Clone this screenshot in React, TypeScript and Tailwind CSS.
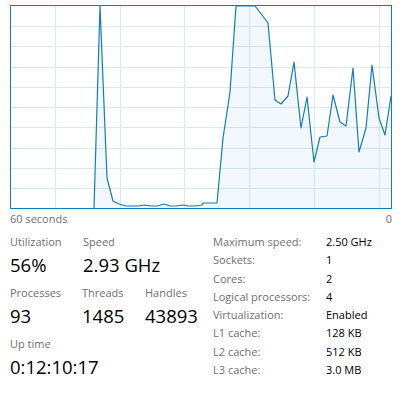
const points: [number, number][] = [
  [94, 208], [100, 6], [107, 178], [113, 201], [119, 204], [126, 206], [132, 206],
  [138, 206], [145, 205], [151, 206], [157, 206], [164, 204], [170, 206], [176, 206],
  [183, 205], [189, 206], [195, 206], [202, 205], [203, 203], [210, 203], [217, 203],
  [223, 138], [230, 92], [236, 6], [243, 6], [249, 6], [255, 6], [262, 15], [268, 23],
  [275, 100], [281, 104], [288, 96], [294, 62], [301, 128], [307, 97], [314, 162],
  [320, 137], [327, 136], [333, 95], [340, 122], [346, 126], [353, 68], [359, 152],
  [366, 128], [372, 65], [379, 118], [385, 135], [391, 96],
];

const hLines = [26, 46, 67, 87, 107, 127, 148, 168, 188];
const vLines = [55, 120, 184, 249, 314, 379];

const specs = [
  ["Maximum speed:", "2.50 GHz"],
  ["Sockets:", "1"],
  ["Cores:", "2"],
  ["Logical processors:", "4"],
  ["Virtualization:", "Enabled"],
  ["L1 cache:", "128 KB"],
  ["L2 cache:", "512 KB"],
  ["L3 cache:", "3.0 MB"],
];

function Chart() {
  const line = points.map(([x, y]) => `${x},${y}`).join(" ");
  const area = `${line} 391,208`;
  return (
    <div className="w-[382px] h-[204px] border border-[#117dbb] bg-white">
      <svg width="380" height="202" viewBox="11 6 380 202" className="block">
        {hLines.map((y) => (
          <line key={"h" + y} x1="11" x2="391" y1={y + 0.5} y2={y + 0.5} stroke="#d9eaf4" strokeWidth="1" />
        ))}
        {vLines.map((x) => (
          <line key={"v" + x} x1={x + 0.5} x2={x + 0.5} y1="6" y2="208" stroke="#d9eaf4" strokeWidth="1" />
        ))}
        <polygon points={area} fill="#117dbb" fillOpacity="0.06" />
        <polyline points={line} fill="none" stroke="#117dbb" strokeWidth="1.2" strokeLinejoin="round" />
      </svg>
    </div>
  );
}

function Stat({ label, value, w }: { label: string; value: string; w: string }) {
  return (
    <div className={w}>
      <div className="text-[11px] leading-[16px] text-[#707070]">{label}</div>
      <div className="mt-[3px] text-[18.5px] leading-[24px] text-black">{value}</div>
    </div>
  );
}

export default function App() {
  return (
    <div className="w-[405px] h-[402px] bg-white pt-[5px] pl-[10px] font-['Open_Sans',sans-serif] overflow-hidden">
      <Chart />
      <div className="flex justify-between w-[382px] pt-[2px] text-[11px] leading-[16px] text-[#707070]">
        <span>60 seconds</span>
        <span>0</span>
      </div>

      <div className="flex mt-[7px]">
        <div className="w-[203px] flex flex-col gap-[8px]">
          <div className="flex">
            <Stat label="Utilization" value="56%" w="w-[73px]" />
            <Stat label="Speed" value="2.93 GHz" w="w-[110px]" />
          </div>
          <div className="flex">
            <Stat label="Processes" value="93" w="w-[72px]" />
            <Stat label="Threads" value="1485" w="w-[63px]" />
            <Stat label="Handles" value="43893" w="w-[60px]" />
          </div>
          <Stat label="Up time" value="0:12:10:17" w="w-[120px]" />
        </div>

        <div className="-mt-[1px] grid grid-cols-[113px_1fr] text-[11px] leading-[17.85px]">
          {specs.map(([k, v]) => (
            <div key={k} className="contents">
              <span className="text-[#707070]">{k}</span>
              <span className="text-black">{v}</span>
            </div>
          ))}
        </div>
      </div>
    </div>
  );
}
